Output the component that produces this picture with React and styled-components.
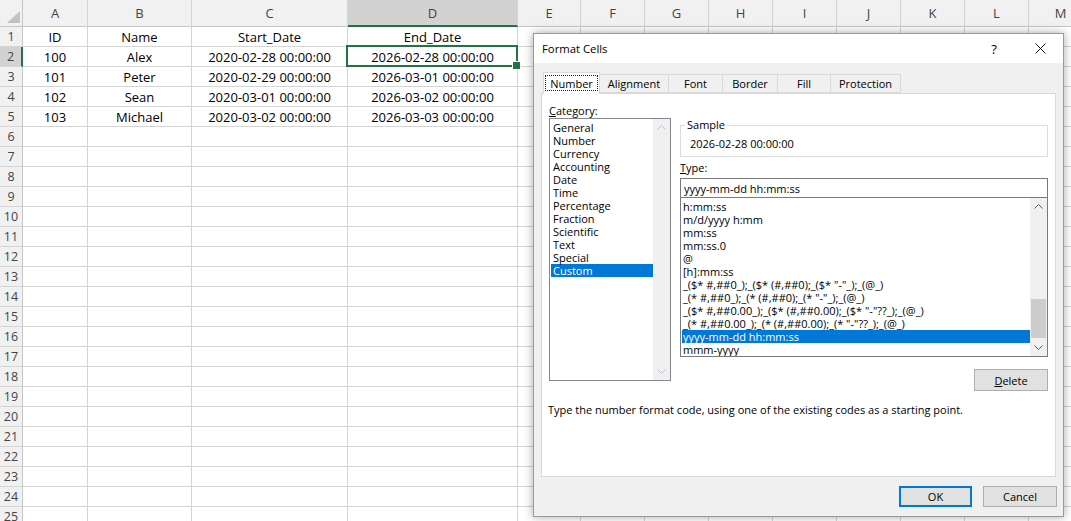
import React from 'react';
import styled, { createGlobalStyle } from 'styled-components';

const Global = createGlobalStyle`
  html, body { margin: 0; padding: 0; background: #fff; }
  body { width: 1071px; height: 521px; overflow: hidden; }
  * { box-sizing: border-box; }
`;

const Screen = styled.div`
  position: relative;
  width: 1071px;
  height: 521px;
  overflow: hidden;
  background: #fff;
`;

/* ---------------- Spreadsheet ---------------- */

const Sheet = styled.div`
  display: grid;
  grid-template-columns: 23px 65px 104px 156px 170px 63px repeat(8, 64px);
  grid-template-rows: 27px repeat(25, 20px);
  font-family: "Open Sans", sans-serif;
  font-size: 13px;
  color: #000;
`;

const Corner = styled.div`
  background: #f1f1f1;
  border-right: 1px solid #c6c6c6;
  border-bottom: 1px solid #c6c6c6;
  display: flex;
  align-items: flex-end;
  justify-content: flex-end;
  padding: 0 2px 3px 0;
`;

const ColHeader = styled.div`
  background: ${p => (p.$active ? '#d2d2d2' : '#f1f1f1')};
  border-right: 1px solid #d5d5d5;
  border-bottom: ${p => (p.$active ? '2px solid #217346' : '1px solid #c6c6c6')};
  display: flex;
  align-items: center;
  justify-content: center;
  color: #444;
  padding-top: ${p => (p.$active ? '1px' : '0')};
`;

const RowHeader = styled.div`
  background: ${p => (p.$active ? '#d2d2d2' : '#f1f1f1')};
  border-bottom: 1px solid #d5d5d5;
  border-right: ${p => (p.$active ? '2px solid #217346' : '1px solid #c6c6c6')};
  display: flex;
  align-items: center;
  justify-content: center;
  color: #444;
  font-size: 12.5px;
`;

const Cell = styled.div`
  position: relative;
  border-right: 1px solid #d4d4d4;
  border-bottom: 1px solid #d4d4d4;
  display: flex;
  align-items: center;
  justify-content: center;
  white-space: nowrap;
  ${p =>
    p.$selected &&
    `
    z-index: 2;
    &::after {
      content: '';
      position: absolute;
      top: -2px; left: -2px; right: -1px; bottom: -1px;
      border: 2px solid #217346;
    }
    &::before {
      content: '';
      position: absolute;
      width: 7px; height: 7px;
      right: -4px; bottom: -4px;
      background: #217346;
      border: 1px solid #fff;
      z-index: 3;
    }
  `}
`;

const COLS = ['A', 'B', 'C', 'D', 'E', 'F', 'G', 'H', 'I', 'J', 'K', 'L', 'M'];
const DATA = [
  ['ID', 'Name', 'Start_Date', 'End_Date'],
  ['100', 'Alex', '2020-02-28 00:00:00', '2026-02-28 00:00:00'],
  ['101', 'Peter', '2020-02-29 00:00:00', '2026-03-01 00:00:00'],
  ['102', 'Sean', '2020-03-01 00:00:00', '2026-03-02 00:00:00'],
  ['103', 'Michael', '2020-03-02 00:00:00', '2026-03-03 00:00:00'],
];

function Spreadsheet() {
  const rows = Array.from({ length: 25 }, (_, i) => i + 1);
  return (
    <Sheet>
      <Corner>
        <svg width="13" height="12" viewBox="0 0 13 12">
          <polygon points="13,0 13,12 0,12" fill="#c2c2c2" />
        </svg>
      </Corner>
      {COLS.map(c => (
        <ColHeader key={c} $active={c === 'D'}>{c}</ColHeader>
      ))}
      {rows.map(r => (
        <React.Fragment key={r}>
          <RowHeader $active={r === 2}>{r}</RowHeader>
          {COLS.map((c, ci) => (
            <Cell key={c} $selected={r === 2 && c === 'D'}>
              {DATA[r - 1] && DATA[r - 1][ci] ? DATA[r - 1][ci] : ''}
            </Cell>
          ))}
        </React.Fragment>
      ))}
    </Sheet>
  );
}

/* ---------------- Dialog ---------------- */

const Dialog = styled.div`
  position: absolute;
  left: 533px;
  top: 33px;
  width: 531px;
  height: 484px;
  background: #f0f0f0;
  border: 1px solid #9a9a9a;
  box-shadow: 0 0 9px rgba(0, 0, 0, 0.35);
  display: flex;
  flex-direction: column;
  font-family: "Open Sans", sans-serif;
  font-size: 11px;
  color: #000;
`;

const TitleBar = styled.div`
  height: 29px;
  flex: none;
  background: #fff;
  display: flex;
  align-items: center;
  padding-left: 8px;
`;

const TitleText = styled.div`
  flex: 1;
  font-size: 11.3px;
`;

const CaptionButton = styled.div`
  width: 46px;
  height: 29px;
  display: flex;
  align-items: center;
  justify-content: center;
  font-size: 13px;
`;

const Body = styled.div`
  flex: 1;
  display: flex;
  flex-direction: column;
  padding: 9px 7px 9px 7px;
`;

const TabStrip = styled.div`
  height: 21px;
  flex: none;
  display: flex;
  align-items: flex-end;
  padding-left: 2px;
  position: relative;
  z-index: 1;
`;

const Tab = styled.div`
  width: ${p => p.$w}px;
  height: ${p => (p.$selected ? 22 : 19)}px;
  margin-bottom: ${p => (p.$selected ? -1 : 0)}px;
  margin-left: ${p => (p.$first ? 0 : -1)}px;
  background: ${p => (p.$selected ? '#fff' : '#f0f0f0')};
  border: 1px solid #d9d9d9;
  border-bottom: ${p => (p.$selected ? 'none' : '1px solid #d9d9d9')};
  display: flex;
  align-items: ${p => (p.$selected ? 'flex-start' : 'center')};
  justify-content: center;
  position: relative;
  z-index: ${p => (p.$selected ? 2 : 1)};
`;

const FocusLabel = styled.div`
  margin: 2px 1px 0 1px;
  align-self: stretch;
  height: 16px;
  flex: 1;
  border: 1px dotted #222;
  display: flex;
  align-items: center;
  justify-content: center;
`;

const Panel = styled.div`
  flex: 1;
  background: #fff;
  border: 1px solid #d9d9d9;
  display: flex;
  flex-direction: column;
`;

const Columns = styled.div`
  display: grid;
  grid-template-columns: 122px 368px;
  column-gap: 9px;
  padding: 9px 0 0 7px;
  align-items: start;
`;

const Column = styled.div`
  display: flex;
  flex-direction: column;
`;

const Label = styled.div`
  height: ${p => p.$h || 15}px;
  line-height: ${p => p.$h || 15}px;
  margin-top: ${p => p.$mt || 0}px;
  white-space: nowrap;
`;

const Mnemonic = styled.span`
  text-decoration: underline;
  text-underline-offset: 1px;
`;

const ListBox = styled.div`
  display: flex;
  height: ${p => p.$h}px;
  background: #fff;
  border: 1px solid ${p => p.$border};
  border-top: ${p => (p.$joined ? 'none' : `1px solid ${p.$border}`)};
`;

const ListItems = styled.div`
  flex: 1;
  min-width: 0;
  padding: 2px 0 0 1px;
  overflow: hidden;
`;

const ListItem = styled.div`
  height: 13px;
  line-height: 13px;
  padding-left: ${p => p.$indent}px;
  white-space: nowrap;
  background: ${p => (p.$selected ? '#0078d7' : 'transparent')};
  color: ${p => (p.$selected ? '#fff' : '#000')};
`;

const ScrollBar = styled.div`
  width: 17px;
  flex: none;
  background: #f0f0f0;
  display: flex;
  flex-direction: column;
`;

const ScrollArrow = styled.div`
  height: 17px;
  flex: none;
  display: flex;
  align-items: center;
  justify-content: center;
`;

const ScrollTrack = styled.div`
  flex: 1;
  display: flex;
  flex-direction: column;
  padding: 0 1px;
`;

const Thumb = styled.div`
  height: 39px;
  margin-top: ${p => p.$offset}px;
  background: #cdcdcd;
`;

const GroupBox = styled.div`
  position: relative;
  margin-top: 22px;
  height: 32px;
  border: 1px solid #dcdcdc;
  padding: 11px 0 0 9px;
  line-height: 14px;
`;

const Legend = styled.span`
  position: absolute;
  top: -8px;
  left: 4px;
  padding: 0 2px;
  background: #fff;
  line-height: 14px;
`;

const TextInput = styled.div`
  margin-top: 3px;
  height: 20px;
  border: 1px solid #7a7a7a;
  display: flex;
  align-items: center;
  padding-left: 3px;
  background: #fff;
`;

const Button = styled.div`
  width: ${p => p.$w || 74}px;
  height: ${p => p.$h || 21}px;
  background: #e1e1e1;
  border: 1px solid ${p => (p.$default ? '#0078d7' : '#adadad')};
  box-shadow: ${p => (p.$default ? 'inset 0 0 0 1px #0078d7' : 'none')};
  display: flex;
  align-items: center;
  justify-content: center;
`;

const ButtonLine = styled.div`
  display: flex;
  justify-content: flex-end;
  margin-top: 12px;
`;

const Description = styled.div`
  margin-top: 12px;
  padding-left: 6px;
  line-height: 14px;
  white-space: nowrap;
`;

const Footer = styled.div`
  height: 21px;
  margin-top: 9px;
  flex: none;
  display: flex;
  justify-content: flex-end;
  gap: 11px;
  margin-right: -1px;
`;

function Chevron({ down, color }) {
  return (
    <svg width="9" height="5" viewBox="0 0 9 5">
      <polyline
        points={down ? '0.5,0.5 4.5,4.5 8.5,0.5' : '0.5,4.5 4.5,0.5 8.5,4.5'}
        fill="none"
        stroke={color}
        strokeWidth="1"
      />
    </svg>
  );
}

function Scroll({ disabled, thumb }) {
  const color = disabled ? '#c4c4c4' : '#606060';
  return (
    <ScrollBar>
      <ScrollArrow><Chevron color={color} /></ScrollArrow>
      <ScrollTrack>{thumb != null && <Thumb $offset={thumb} />}</ScrollTrack>
      <ScrollArrow><Chevron down color={color} /></ScrollArrow>
    </ScrollBar>
  );
}

const TABS = [
  ['Number', 57],
  ['Alignment', 70],
  ['Font', 55],
  ['Border', 56],
  ['Fill', 54],
  ['Protection', 71],
];

const CATEGORIES = [
  'General', 'Number', 'Currency', 'Accounting', 'Date', 'Time',
  'Percentage', 'Fraction', 'Scientific', 'Text', 'Special', 'Custom',
];

const TYPES = [
  'h:mm:ss',
  'm/d/yyyy h:mm',
  'mm:ss',
  'mm:ss.0',
  '@',
  '[h]:mm:ss',
  '_($* #,##0_);_($* (#,##0);_($* "-"_);_(@_)',
  '_(* #,##0_);_(* (#,##0);_(* "-"_);_(@_)',
  '_($* #,##0.00_);_($* (#,##0.00);_($* "-"??_);_(@_)',
  '_(* #,##0.00_);_(* (#,##0.00);_(* "-"??_);_(@_)',
  'yyyy-mm-dd hh:mm:ss',
  'mmm-yyyy',
];

function FormatCells() {
  return (
    <Dialog>
      <TitleBar>
        <TitleText>Format Cells</TitleText>
        <CaptionButton>?</CaptionButton>
        <CaptionButton>
          <svg width="11" height="11" viewBox="0 0 11 11">
            <path d="M0.5 0.5 L10.5 10.5 M10.5 0.5 L0.5 10.5" stroke="#111" strokeWidth="1" fill="none" />
          </svg>
        </CaptionButton>
      </TitleBar>
      <Body>
        <TabStrip>
          {TABS.map(([name, w], i) => (
            <Tab key={name} $w={w} $selected={i === 0} $first={i === 0}>
              {i === 0 ? <FocusLabel>{name}</FocusLabel> : name}
            </Tab>
          ))}
        </TabStrip>
        <Panel>
          <Columns>
            <Column>
              <Label><Mnemonic>C</Mnemonic>ategory:</Label>
              <ListBox $h={263} $border="#828790">
                <ListItems>
                  {CATEGORIES.map(c => (
                    <ListItem key={c} $indent={2} $selected={c === 'Custom'}>{c}</ListItem>
                  ))}
                </ListItems>
                <Scroll disabled />
              </ListBox>
            </Column>
            <Column>
              <GroupBox>
                <Legend>Sample</Legend>
                2026-02-28 00:00:00
              </GroupBox>
              <Label $h={14} $mt={4}><Mnemonic>T</Mnemonic>ype:</Label>
              <TextInput>yyyy-mm-dd hh:mm:ss</TextInput>
              <ListBox $h={159} $border="#7a7a7a" $joined>
                <ListItems>
                  {TYPES.map(t => (
                    <ListItem key={t} $indent={1} $selected={t === 'yyyy-mm-dd hh:mm:ss'}>{t}</ListItem>
                  ))}
                </ListItems>
                <Scroll thumb={84} />
              </ListBox>
              <ButtonLine>
                <Button $w={74} $h={22}><span><Mnemonic>D</Mnemonic>elete</span></Button>
              </ButtonLine>
            </Column>
          </Columns>
          <Description>Type the number format code, using one of the existing codes as a starting point.</Description>
        </Panel>
        <Footer>
          <Button $w={73} $default>OK</Button>
          <Button $w={74}>Cancel</Button>
        </Footer>
      </Body>
    </Dialog>
  );
}

export default function App() {
  return (
    <Screen>
      <Global />
      <Spreadsheet />
      <FormatCells />
    </Screen>
  );
}
